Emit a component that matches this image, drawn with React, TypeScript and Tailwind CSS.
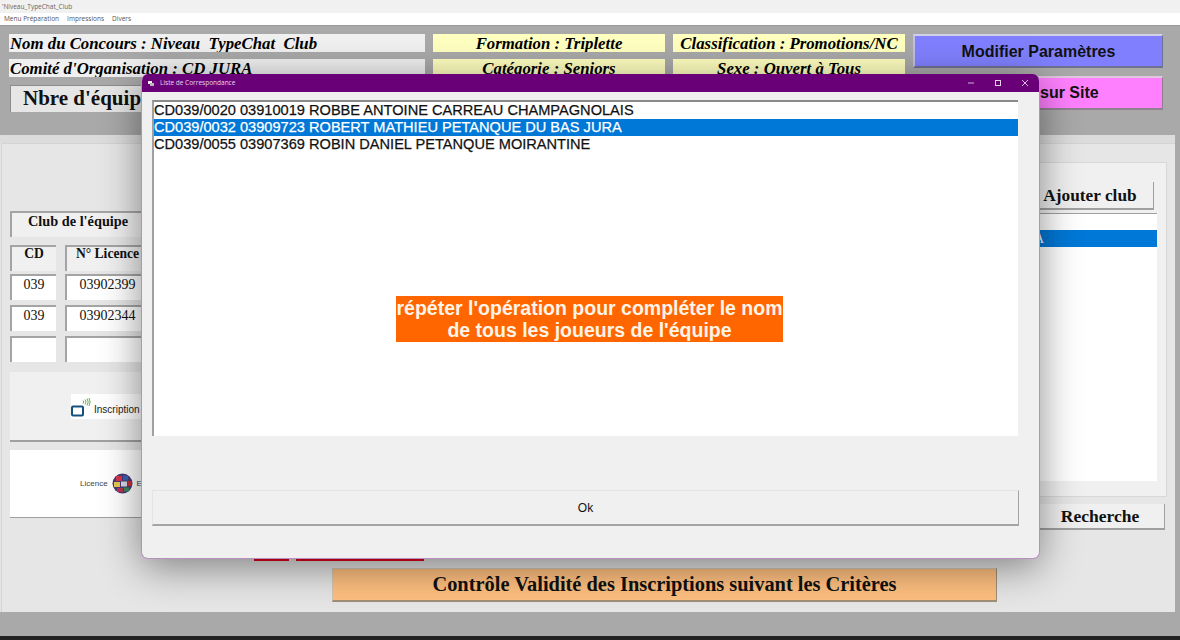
import React from "react";

const serif = "font-['Liberation_Serif',serif]";
const sans = "font-['Liberation_Sans',sans-serif]";

function Tablet() {
  return (
    <svg width="23" height="24" viewBox="0 0 23 24" fill="none" className="shrink-0">
      <rect x="1" y="12.5" width="11" height="9" rx="1" stroke="#14507e" strokeWidth="2" />
      <path d="M12 6.5a2 2 0 0 1 0 3M14 5.5a4 4 0 0 1 0 5M16 4.5a6 6 0 0 1 0 7M18 4a8 8 0 0 1 0 8" stroke="#66b04a" strokeWidth="1" />
    </svg>
  );
}

function Globe() {
  return (
    <svg width="21" height="21" viewBox="0 0 21 21" className="shrink-0">
      <circle cx="10.5" cy="10.5" r="10" fill="#4b3a78" />
      <rect x="4" y="3" width="6" height="5" fill="#d8364a" />
      <rect x="11" y="2.5" width="5" height="5" fill="#3a62b0" />
      <rect x="2" y="9" width="6" height="5" fill="#e8c94a" />
      <rect x="9" y="8.5" width="6" height="5" fill="#d9d9e6" />
      <rect x="15.5" y="8" width="4" height="5" fill="#c83030" />
      <rect x="5" y="15" width="6" height="4" fill="#bb3350" />
      <rect x="12" y="14.5" width="5" height="4" fill="#3c8a55" />
    </svg>
  );
}

function HeadField({ w, children, yellow }: { w: string; children: React.ReactNode; yellow?: boolean }) {
  return (
    <div
      className={`${w} h-[18px] pt-[2px] flex items-center whitespace-pre overflow-hidden ${serif} font-bold italic text-[16.8px] text-black ${
        yellow ? "bg-[#ffffc0] justify-center" : "bg-[#f0f0f0] pl-px"
      }`}
    >
      {children}
    </div>
  );
}

function Sunken({ w, bold, children }: { w: string; bold?: boolean; children?: React.ReactNode }) {
  return (
    <div
      className={`${w} h-[26px] shrink-0 flex items-center justify-center border-t-2 border-l-2 border-t-[#a4a4a4] border-l-[#a4a4a4] ${serif} ${
        bold ? "pb-[10px] font-bold text-[13.6px] bg-[#f0f0f0]" : "pb-[8px] text-[14px] bg-white"
      } text-[#111]`}
    >
      {children}
    </div>
  );
}

function App() {
  return (
    <div className="relative w-[1180px] h-[640px] overflow-hidden bg-[#a9a9a9]">
      {/* Window chrome */}
      <div className="h-[13px] bg-[#f1f1f1] pl-[2px] pt-[1px] flex items-center font-['Open_Sans',sans-serif] text-[6.5px] text-[#666]">
        'Niveau_TypeChat_Club
      </div>
      <div className="h-3 bg-white pl-[4px] flex items-center gap-[8px] font-['Open_Sans',sans-serif] text-[6.5px] text-[#555]">
        <span>Menu Préparation</span>
        <span>Impressions</span>
        <span>Divers</span>
      </div>

      {/* Header */}
      <div className="h-[110px] pl-[9px] pt-[8px] flex gap-2 bg-[#a9a9a9] border-t border-t-[#9a9a9a]">
        <div className="w-[896px] flex flex-col gap-[7px]">
          <div className="flex gap-2">
            <HeadField w="w-[416px]">{"Nom du Concours : Niveau  TypeChat  Club"}</HeadField>
            <HeadField w="w-[232px]" yellow>Formation : Triplette</HeadField>
            <HeadField w="w-[232px]" yellow>Classification : Promotions/NC</HeadField>
          </div>
          <div className="flex gap-2">
            <HeadField w="w-[416px]">Comité d'Organisation : CD JURA</HeadField>
            <HeadField w="w-[232px]" yellow>Catégorie : Seniors</HeadField>
            <HeadField w="w-[232px]" yellow>Sexe : Ouvert à Tous</HeadField>
          </div>
          <div className={`mt-px ml-px w-[300px] h-[27px] flex items-center pl-[12px] bg-[#e6e6e6] border-t border-l border-[#8c8c8c] ${serif} font-bold text-[21px] text-[#111]`}>
            Nbre d'équipes
          </div>
        </div>
        <div className="w-[250px] flex flex-col gap-2">
          <div className={`h-[34px] pt-[1px] flex items-center justify-center bg-[#8080ff] border-t-2 border-l-2 border-t-[#d0d0e8] border-l-[#c0c0e8] border-b-2 border-r border-b-[#707090] border-r-[#707090] ${sans} font-bold text-[16px] text-[#111]`}>
            Modifier Paramètres
          </div>
          <div className={`h-[34px] pl-[3px] flex items-center justify-center bg-[#ff80ff] border-t-2 border-l-2 border-t-[#e0c8e0] border-l-[#e0c8e0] border-b-2 border-r border-b-[#908090] border-r-[#908090] ${sans} font-bold text-[16px] text-[#111]`}>
            Publier sur Site
          </div>
        </div>
      </div>

      {/* Main panel */}
      <div className="w-[1175px] h-[477px] bg-[#e4e4e4] border-t-[8px] border-t-[#dcdcdc] pl-px">
        <div className="h-full flex flex-col border-t border-l border-[#d4d4d4] bg-[#e6e6e6]">
          <div className="flex-1 flex min-h-0">
            {/* Left column */}
            <div className="w-[430px] pt-[67px] pl-[8px] flex flex-col shrink-0">
              <div className={`w-[300px] h-[26px] bg-[#f0f0f0] border-t-2 border-l-2 border-t-[#a4a4a4] border-l-[#a4a4a4] pl-[16px] pb-[6px] flex items-center ${serif} font-bold text-[14.3px] text-[#111]`}>
                Club de l'équipe
              </div>
              <div className="mt-[8px] flex flex-col gap-[5px]">
                {[
                  { a: "CD", b: "N° Licence", bold: true },
                  { a: "039", b: "03902399" },
                  { a: "039", b: "03902344" },
                  { a: "", b: "" },
                ].map((r, i) => (
                  <div key={i} className={`flex gap-[9px] ${i === 0 ? "mb-[-2px]" : ""}`}>
                    <Sunken w="w-[46px]" bold={r.bold}>{r.a}</Sunken>
                    <Sunken w="w-[83px]" bold={r.bold}>{r.b}</Sunken>
                  </div>
                ))}
              </div>
              <div className="mt-[10px] w-[300px] h-[70px] bg-[#f0f0f0] border-b-2 border-b-[#a0a0a0] flex items-center pl-[61px]">
                <div className="h-[25px] bg-white flex items-center w-[120px]">
                  <Tablet />
                  <span className={`${sans} pt-[6px] text-[10px] text-[#222]`}>Inscription</span>
                </div>
              </div>
              <div className="mt-[8px] w-[300px] h-[68px] bg-white border-b border-b-[#a0a0a0] flex items-center pl-[70px] gap-[4px]">
                <span className={`${sans} text-[8px] text-[#444]`}>Licence</span>
                <Globe />
                <span className={`${sans} text-[8px] text-[#444]`}>Etranger</span>
              </div>
              <div className="ml-[244px] mt-[38px] flex gap-[7px] h-[5px]">
                <div className="w-[35px] bg-[#e8001a]" />
                <div className="w-[128px] bg-[#e8001a]" />
              </div>
            </div>

            <div className="flex-1" />

            {/* Right column */}
            <div className="w-[250px] shrink-0 mt-[18px] mr-[8px] flex flex-col">
              <div className="h-[335px] bg-[#f0f0f0] border border-[#d8d8d8] pt-[19px] pr-[9px] flex flex-col">
                <div className={`ml-auto w-[119px] h-[28px] pt-[1px] pr-[8px] bg-[#f0f0f0] border-r border-b-2 border-r-[#a0a0a0] border-b-[#a0a0a0] mr-[3px] flex items-center justify-center ${serif} font-bold text-[17.3px] text-[#111]`}>
                  Ajouter club
                </div>
                <div className="mt-[3px] h-[268px] bg-white border-t border-t-[#a0a0a0] pt-[16px]">
                  <div className={`h-[17px] bg-[#0078d7] flex items-center justify-end whitespace-nowrap ${serif} text-[14px] text-white pr-[113px]`}>
                    PETANQUE DU BAS JURA
                  </div>
                </div>
              </div>
              <div className={`mt-[7px] ml-auto mr-[2px] w-[129px] h-[26px] pt-[1px] bg-[#f0f0f0] border-r border-b-2 border-r-[#a0a0a0] border-b-[#a0a0a0] flex items-center justify-center ${serif} font-bold text-[17.5px] text-[#111]`}>
                Recherche
              </div>
            </div>
          </div>
          <div className="h-[44px] pl-[330px] shrink-0">
            <div className={`w-[665px] h-[34px] bg-[#ffc080] border-t border-l border-[#d0c8b8] border-b-2 border-r border-b-[#a09078] border-r-[#a09078] flex items-center justify-center ${serif} font-bold text-[20.4px] text-[#111]`}>
              Contrôle Validité des Inscriptions suivant les Critères
            </div>
          </div>
        </div>
      </div>
      <div className="h-[24px]" />
      <div className="h-[4px] bg-[#222222]" />

      {/* Dialog window */}
      <div className="absolute left-[141px] top-[74px] w-[899px] h-[485px] rounded-[7px] bg-[#f0f0f0] border border-t-0 border-[#b890c0] shadow-[0_8px_40px_rgba(0,0,0,0.45)] overflow-hidden flex flex-col">
        <div className="h-[18px] bg-[#6a0078] flex items-center pl-[5px] shrink-0 text-[#e8d8ec]">
          <svg width="9" height="9" viewBox="0 0 9 9" className="shrink-0">
            <rect x="1" y="2" width="4" height="3" fill="#eee" />
            <rect x="3" y="4" width="4" height="3" fill="#bbb" />
          </svg>
          <span className="ml-[4px] font-['Open_Sans',sans-serif] text-[6.5px]">Liste de Correspondance</span>
          <div className="ml-auto flex items-center gap-[19px] pr-[10px]">
            <svg width="8" height="8" viewBox="0 0 8 8" fill="none"><path d="M1 4h6" stroke="#cdb4d4" strokeWidth="1" /></svg>
            <svg width="8" height="8" viewBox="0 0 8 8" fill="none"><rect x="1.5" y="1.5" width="5" height="5" stroke="#e4d4e8" strokeWidth="1" /></svg>
            <svg width="8" height="8" viewBox="0 0 8 8" fill="none"><path d="M1 1l6 6M7 1l-6 6" stroke="#e4d4e8" strokeWidth="0.9" /></svg>
          </div>
        </div>
        <div className="flex-1 pt-[8px] px-[10px] flex flex-col">
          <div className={`w-[866px] h-[336px] bg-white border-t-2 border-l-2 border-t-[#8a8a8a] border-l-[#a0a0a0] ${sans} text-[14.6px] [-webkit-text-stroke:0.25px] text-[#111]`}>
            <div className="h-[17px] leading-[17px]">CD039/0020 03910019 ROBBE ANTOINE CARREAU CHAMPAGNOLAIS</div>
            <div className="h-[17px] leading-[17px] bg-[#0078d7] text-white">CD039/0032 03909723 ROBERT MATHIEU PETANQUE DU BAS JURA</div>
            <div className="h-[17px] leading-[17px]">CD039/0055 03907369 ROBIN DANIEL PETANQUE MOIRANTINE</div>
          </div>
          <div className={`mt-[54px] w-[867px] h-[36px] bg-[#f0f0f0] border-t border-l border-r border-b-2 border-t-[#e4e4e4] border-l-[#e4e4e4] border-r-[#a4a4a4] border-b-[#a4a4a4] flex items-center justify-center ${sans} text-[12px] text-[#111]`}>
            Ok
          </div>
        </div>
      </div>

      {/* Orange notice over the dialog */}
      <div className={`absolute left-[396px] top-[296px] w-[387px] h-[46px] bg-[#ff6600] flex items-center justify-center text-center ${sans} font-bold text-[19.5px] leading-[22px] text-[#fff4e8] whitespace-pre`}>
        {"répéter l'opération pour compléter le nom\nde tous les joueurs de l'équipe"}
      </div>
    </div>
  );
}

export default App;
